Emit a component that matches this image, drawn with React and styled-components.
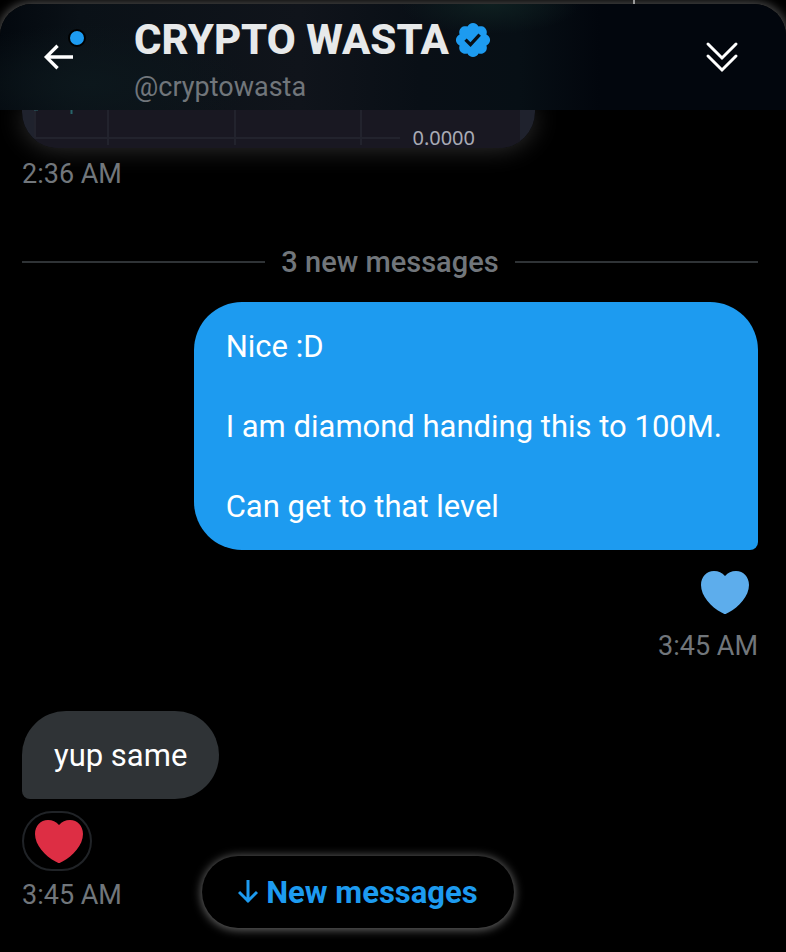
import * as React from "react";
import styled, { createGlobalStyle } from "styled-components";

const BLUE = "#1d9bf0";
const GRAY = "#71767b";

const ArrowLeftIcon = () => (
  <svg width="40" height="40" viewBox="0 0 24 24" fill="#fff" aria-hidden="true">
    <path d="M7.414 13l5.043 5.04-1.414 1.42L3.586 12l7.457-7.46 1.414 1.42L7.414 11H21v2H7.414z" />
  </svg>
);

const VerifiedIcon = () => (
  <svg width="40" height="40" viewBox="0 0 22 22" fill={BLUE} role="img" aria-label="Verified">
    <path d="M20.396 11c-.018-.646-.215-1.275-.57-1.816-.354-.54-.852-.972-1.438-1.246.223-.607.27-1.264.14-1.897-.131-.634-.437-1.218-.882-1.687-.47-.445-1.053-.75-1.687-.882-.633-.13-1.29-.083-1.897.14-.273-.587-.704-1.086-1.245-1.44S11.647 1.62 11 1.604c-.646.017-1.273.213-1.813.568s-.969.854-1.24 1.44c-.608-.223-1.267-.272-1.902-.14-.635.13-1.22.436-1.69.882-.445.47-.749 1.055-.878 1.688-.13.633-.08 1.29.144 1.896-.587.274-1.087.705-1.443 1.245-.356.54-.555 1.17-.574 1.817.02.647.218 1.276.574 1.817.356.54.856.972 1.443 1.245-.224.606-.274 1.263-.144 1.896.13.634.433 1.218.877 1.688.47.443 1.054.747 1.687.878.633.132 1.29.084 1.897-.136.274.586.705 1.084 1.246 1.439.54.354 1.17.551 1.816.569.647-.016 1.276-.213 1.817-.567s.972-.854 1.245-1.44c.604.239 1.266.296 1.903.164.636-.132 1.22-.447 1.68-.907.46-.46.776-1.044.908-1.681s.075-1.299-.165-1.903c.586-.274 1.084-.705 1.439-1.246.354-.54.551-1.17.569-1.816zM9.662 14.85l-3.429-3.428 1.293-1.302 2.072 2.072 4.4-4.794 1.347 1.246z" />
  </svg>
);

const CollapseIcon = () => (
  <svg width="40" height="40" viewBox="0 0 40 40" fill="none" stroke="#fff" strokeWidth="3" strokeLinecap="round" aria-hidden="true">
    <path d="M6 7l14 14L34 7M6 19l14 14 14-14" />
  </svg>
);

const ArrowDownIcon = () => (
  <svg width="20" height="26" viewBox="0 0 20 26" fill="none" stroke={BLUE} strokeWidth="3" aria-hidden="true">
    <path d="M10 1v22M1 13l9 9 9-9" />
  </svg>
);

const HeartIcon = ({ color }) => (
  <svg width="48" height="43" viewBox="0 0 48 43" fill={color} aria-hidden="true">
    <path d="M24 5C21 1.800 17.500 0 13 0 5.500 0 0 6 0 14c0 11 10 22 20.500 27.500C22 42.300 23 43 24 43s2-.7 3.500-1.500C38 36 48 25 48 14 48 6 42.500 0 35 0c-4.500 0-8 1.800-11 5z" />
  </svg>
);

const ChartTail = () => (
  <svg width="513" height="38" viewBox="0 0 513 38" aria-hidden="true">
    <rect width="513" height="38" fill="#1f222d" />
    <rect x="13" width="485" height="38" fill="#191822" />
    <g stroke="#22232d" strokeWidth="2">
      <path d="M86 0v35M213 0v35M339 0v35M13 28h365" />
      <path d="M13 0v28" />
    </g>
    <path d="M49.500 0v4" stroke="#28656a" strokeWidth="2" />
    <path d="M12 0h4" stroke="#28656a" />
  </svg>
);

const sent = ["Nice :D", "I am diamond handing this to 100M.", "Can get to that level"];

export default function App() {
  return (
    <Page>
      <GlobalStyle />
      <Drawer>
        <Header>
          <BackButton type="button" aria-label="Back">
            <ArrowLeftIcon />
            <UnreadDot />
          </BackButton>
          <Profile>
            <NameRow>
              <Name>CRYPTO WASTA</Name>
              <VerifiedIcon />
            </NameRow>
            <Handle href="#profile">@cryptowasta</Handle>
          </Profile>
          <IconButton type="button" aria-label="Collapse">
            <CollapseIcon />
          </IconButton>
        </Header>
        <Messages>
          <MediaClip>
            <Media>
              <ChartTail />
              <AxisLabel>0.0000</AxisLabel>
            </Media>
          </MediaClip>
          <Time>2:36 AM</Time>
          <Divider>3 new messages</Divider>
          <Group $own>
            <Bubble $own>
              {sent.map((line) => (
                <p key={line}>{line}</p>
              ))}
            </Bubble>
            <Reaction type="button" aria-label="Liked" $own>
              <HeartIcon color="#5dadec" />
            </Reaction>
            <Time>3:45 AM</Time>
          </Group>
          <Group>
            <Bubble>
              <p>yup same</p>
            </Bubble>
            <Reaction type="button" aria-label="Liked">
              <HeartIcon color="#dd2e44" />
            </Reaction>
            <Time>3:45 AM</Time>
          </Group>
        </Messages>
        <Floating>
          <NewMessages type="button">
            <ArrowDownIcon />
            New messages
          </NewMessages>
        </Floating>
      </Drawer>
    </Page>
  );
}

const GlobalStyle = createGlobalStyle`
  * {
    box-sizing: border-box;
  }
  body {
    margin: 0;
    background: #000;
    font-family: Roboto, "Liberation Sans", sans-serif;
  }
  p, h1 {
    margin: 0;
  }
  button {
    padding: 0;
    border: 0;
    background: none;
    font-family: inherit;
    cursor: pointer;
  }
  svg {
    display: block;
    flex: none;
  }
`;

const Page = styled.div`
  display: flex;
  flex-direction: column;
  min-height: 100vh;
  padding-top: 4px;
  overflow: hidden;
  background: linear-gradient(#888, #888) 633px 0 / 2px 40px no-repeat, #000;
`;

const Drawer = styled.main`
  position: relative;
  flex: 1;
  border-radius: 32px 32px 0 0;
  background: #000;
  box-shadow: 0 0 8px 3px rgba(255, 255, 255, 0.26);
`;

const Header = styled.header`
  display: flex;
  align-items: center;
  height: 106px;
  padding: 0 44px 0 38px;
  border-radius: 32px 32px 0 0;
  background: radial-gradient(ellipse 90px 30px at 490px 0, #0e1f20, transparent),
    radial-gradient(ellipse 160px 60px at 90px 80px, #0c171c, transparent),
    linear-gradient(90deg, #03080e 0, #0a1117 80px, #10141b 300px, #090f16 420px, #070f15 520px, #02060d 600px, #02060d);
`;

const IconButton = styled.button`
  display: flex;
  color: #fff;
`;

const BackButton = styled(IconButton)`
  position: relative;
  width: 40px;
`;

const UnreadDot = styled.span`
  position: absolute;
  top: -8px;
  right: -8px;
  width: 18px;
  height: 18px;
  border: 2px solid #000;
  border-radius: 50%;
  background: ${BLUE};
`;

const Profile = styled.div`
  flex: 1;
  min-width: 0;
  padding: 8px 0 0 56px;
`;

const NameRow = styled.div`
  display: flex;
  align-items: center;
  gap: 4px;
`;

const Name = styled.h1`
  color: #e7e9ea;
  font-size: 42px;
  font-weight: 800;
  line-height: 52px;
`;

const Handle = styled.a`
  display: block;
  color: ${GRAY};
  font-size: 27px;
  line-height: 42px;
  text-decoration: none;
`;

const Messages = styled.div`
  display: flex;
  flex-direction: column;
  padding: 0 28px 24px 22px;
`;

/* keeps the glow of the media card out from under the header */
const MediaClip = styled.div`
  margin: 0 -22px -18px;
  padding: 0 22px 28px;
  overflow: hidden;
`;

const Media = styled.div`
  position: relative;
  width: 513px;
  border-radius: 0 0 36px 36px;
  box-shadow: 0 0 26px rgba(255, 255, 255, 0.2);
  svg {
    border-radius: inherit;
  }
`;

const AxisLabel = styled.span`
  position: absolute;
  right: 60px;
  bottom: -4px;
  color: #a9abb5;
  font-family: "Noto Sans", sans-serif;
  font-size: 20px;
  line-height: 28px;
`;

const Time = styled.time`
  color: ${GRAY};
  font-size: 27px;
  line-height: 32px;
`;

const Divider = styled.div`
  display: flex;
  align-items: center;
  gap: 16px;
  margin: 52px 0 20px;
  color: ${GRAY};
  font-size: 29px;
  font-weight: 500;
  line-height: 40px;
  &::before,
  &::after {
    content: "";
    flex: 1;
    height: 2px;
    background: #2f3336;
  }
`;

const Group = styled.section`
  display: flex;
  flex-direction: column;
  align-items: ${(p) => (p.$own ? "flex-end" : "flex-start")};
  & + & {
    margin-top: 49px;
  }
`;

const Bubble = styled.div`
  display: flex;
  flex-direction: column;
  gap: 40px;
  padding: 25px ${(p) => (p.$own ? "36px" : "32px")} 23px 32px;
  border-radius: ${(p) => (p.$own ? "48px 48px 8px 48px" : "44px 44px 44px 8px")};
  background: ${(p) => (p.$own ? BLUE : "#2f3336")};
  color: #fff;
  font-size: 31px;
  line-height: 40px;
`;

const Reaction = styled.button`
  display: flex;
  align-items: center;
  justify-content: center;
  width: ${(p) => (p.$own ? "66px" : "70px")};
  height: 60px;
  margin: 12px 0 8px;
  padding-left: ${(p) => (p.$own ? "0" : "4px")};
  border: 2px solid ${(p) => (p.$own ? "transparent" : "#202327")};
  border-radius: 30px;
`;

const Floating = styled.div`
  position: absolute;
  left: 0;
  right: 70px;
  bottom: 24px;
  display: flex;
  justify-content: center;
`;

const NewMessages = styled.button`
  display: flex;
  align-items: center;
  gap: 8px;
  height: 72px;
  padding: 0 36px;
  border-radius: 36px;
  background: #000;
  box-shadow: 0 1px 10px 1px rgba(255, 255, 255, 0.4);
  color: ${BLUE};
  font-size: 31px;
  font-weight: 700;
`;
